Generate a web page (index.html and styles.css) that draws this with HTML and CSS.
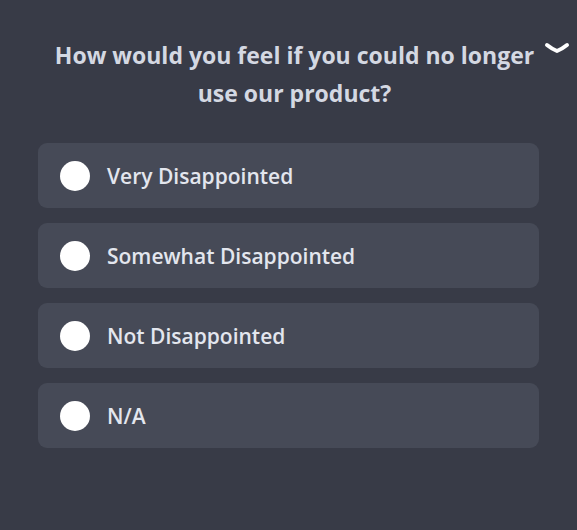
FILE: index.html
```html
<!DOCTYPE html>
<html lang="en">
<head>
<meta charset="UTF-8" />
<title>Survey</title>
<link rel="stylesheet" href="styles.css">
</head>
<body>
<div class="survey">
  <div class="question">
    <h2>How would you feel if you could no longer use our product?</h2>
    <button class="collapse" aria-label="Collapse">
      <svg width="26" height="16" viewBox="0 0 26 16"><path d="M3 4 Q8 8 13 10 Q18 8 23 4" fill="none" stroke="#ffffff" stroke-width="4" stroke-linecap="round" stroke-linejoin="round"/></svg>
    </button>
  </div>

  <div class="options">
    <label class="option"><span class="radio"></span>Very Disappointed</label>
    <label class="option"><span class="radio"></span>Somewhat Disappointed</label>
    <label class="option"><span class="radio"></span>Not Disappointed</label>
    <label class="option"><span class="radio"></span>N/A</label>
  </div>
</div>
</body>
</html>
```

FILE: styles.css
```css
body {
  margin: 0;
  background: #383b47;
  font-family: 'Open Sans', Lato, sans-serif;
  color: #e3e6ee;
}
.survey {
  padding: 36px 38px 0 38px;
  width: 501px;
}
.question {
  position: relative;
  margin-bottom: 31px;
}
.question h2 {
  margin: 0 -12px 0 0;
  font-size: 23px;
  line-height: 38px;
  font-weight: 700;
  text-align: center;
  color: #d4d8e2;
}
.collapse {
  position: absolute;
  top: 5px;
  right: -31px;
  background: none;
  border: none;
  padding: 0;
  cursor: pointer;
}
.options {
  display: flex;
  flex-direction: column;
  gap: 15px;
}
.option {
  display: flex;
  align-items: center;
  height: 65px;
  padding-left: 22px;
  background: #464a57;
  border-radius: 9px;
  font-size: 21px;
  font-weight: 600;
  color: #e3e6ee;
  cursor: pointer;
}
.radio {
  width: 30px;
  height: 30px;
  border-radius: 50%;
  background: #fff;
  margin-right: 17px;
  flex-shrink: 0;
}
```
